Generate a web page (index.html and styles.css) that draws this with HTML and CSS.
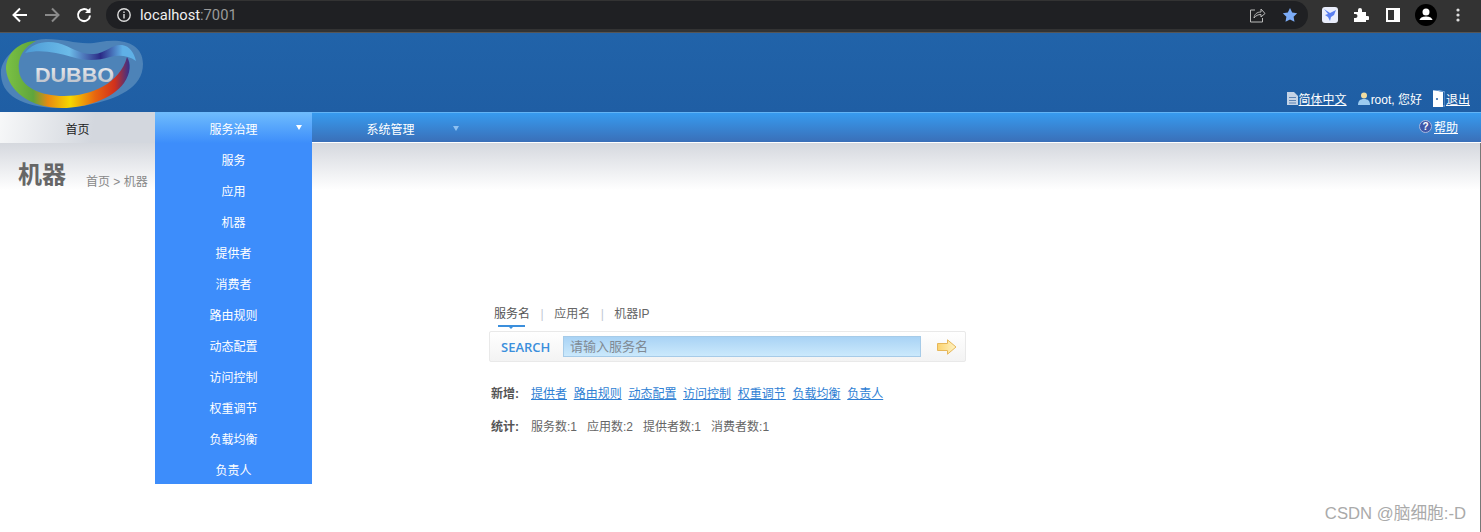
FILE: index.html
```html
<!DOCTYPE html>
<html lang="zh-CN">
	<head>
		<meta charset="UTF-8" />
		<title>dubbo admin</title>
		<link rel="stylesheet" href="styles.css">
	</head>
	<body>
		<div class="browser">
			<svg class="tool" width="20" height="20" viewBox="0 0 20 20"><path d="M17 10H4M10 3.500L3.500 10l6.500 6.500" fill="none" stroke="#fff" stroke-width="2"/></svg>
			<svg class="tool" width="20" height="20" viewBox="0 0 20 20"><path d="M3 10h13M10 3.500l6.500 6.500-6.500 6.500" fill="none" stroke="#8a8a8a" stroke-width="2"/></svg>
			<svg class="tool" width="20" height="20" viewBox="0 0 20 20"><path d="M16 10.500a6 6 0 1 1-1.800-4.700" fill="none" stroke="#fff" stroke-width="2"/><path d="M16.500 2.500v5.500H11z" fill="#fff"/></svg>
			<div class="omnibox">
				<svg width="16" height="16" viewBox="0 0 16 16"><circle cx="8" cy="8" r="6.200" fill="none" stroke="#ddd" stroke-width="1.400"/><path d="M7.300 7h1.400v4.500H7.300zM7.300 4.500h1.400v1.400H7.300z" fill="#ddd"/></svg>
				<span class="url">localhost<span class="port">:7001</span></span>
				<span class="spacer"></span>
				<svg width="18" height="18" viewBox="0 0 18 18"><path d="M7 4H2.500v12h12v-4M6 12c.5-4 3-6 7-6V3l4 4.500L13 11V8.500c-3 0-5 1-7 3.500z" fill="none" stroke="#bbb" stroke-width="1"/></svg>
				<svg width="16" height="16" viewBox="0 0 16 16"><path d="M8 1l2.200 4.600 5 .7-3.600 3.500.9 5L8 12.400l-4.500 2.400.9-5L.8 6.300l5-.7z" fill="#7cacf8"/></svg>
			</div>
			<div class="toolbar">
				<div class="ext-logo">
					<svg width="16" height="16" viewBox="0 0 16 16"><path d="M2 2l6 4 6-3-2 5-3 2-1 4-2-4-3-2 3-1z" fill="#5a7ff0"/></svg>
				</div>
				<svg width="16" height="16" viewBox="0 0 16 16"><path d="M1 5h4V3a2 2 0 0 1 4 0v2h4v4h1.500a2 2 0 0 1 0 4H13v2H1v-4h1.500a2 2 0 0 0 0-4H1z" fill="#fff"/></svg>
				<svg class="tb-panel" width="14" height="14" viewBox="0 0 14 14"><path d="M0 0h14v14H0zM2 2v10h6V2z" fill="#fff"/></svg>
				<svg class="tb-avatar" width="22" height="22" viewBox="0 0 22 22"><circle cx="11" cy="11" r="11" fill="#000"/><circle cx="11" cy="8" r="3.500" fill="#fff"/><path d="M4.500 16c1-3 4-3.500 6.500-3.500s5.500.5 6.500 3.500z" fill="#fff"/></svg>
				<svg width="4" height="14" viewBox="0 0 4 14"><circle cx="2" cy="2" r="1.600" fill="#ddd"/><circle cx="2" cy="7" r="1.600" fill="#ddd"/><circle cx="2" cy="12" r="1.600" fill="#ddd"/></svg>
			</div>
		</div>

		<div class="header">
			<div class="logo">
				<svg width="144" height="79" viewBox="0 0 144 79">
					<defs>
						<linearGradient id="ring" x1="0" y1="0" x2="1" y2="0">
							<stop offset="0" stop-color="#7bc143"/>
							<stop offset="0.22" stop-color="#5fa53c"/>
							<stop offset="0.34" stop-color="#e98a10"/>
							<stop offset="0.52" stop-color="#f6d800"/>
							<stop offset="0.72" stop-color="#e8650f"/>
							<stop offset="0.88" stop-color="#d1301c"/>
							<stop offset="1" stop-color="#32308f"/>
						</linearGradient>
						<linearGradient id="band" x1="0" y1="0" x2="1" y2="0">
							<stop offset="0" stop-color="#4c9bd6"/>
							<stop offset="0.4" stop-color="#6cbbe8"/>
							<stop offset="0.68" stop-color="#2b2a86"/>
							<stop offset="0.88" stop-color="#5fb0e6"/>
						</linearGradient>
						<linearGradient id="word" x1="0" y1="0" x2="0" y2="1">
							<stop offset="0" stop-color="#f4f5f7"/>
							<stop offset="1" stop-color="#b4bac4"/>
						</linearGradient>
					</defs>
					<path d="M1 42C-1 24 22 7 46 6c22 0 34 7 54 3 20-4 43 0 43 22 0 24-26 35-55 41-30 6-85 5-87-30z" fill="#4d83b8"/>
					<path d="M6 36C6 20 20 8 36 8 24 14 17 24 19 38c2 16 21 25 45 25 28 0 56-13 63-39 4 6 4 16-3 26C112 66 86 75 62 75 30 75 8 58 6 36z" fill="url(#ring)"/>
					<path d="M25 20C32 10 45 7 58 10c14 4 22 12 36 11 12-1 18-10 28-9 8 1 12 8 14 16-8-6-18-6-26-4-12 4-26 4-38 0-16-5-32-8-47-4z" fill="url(#band)"/>
					<text class="logo-word" x="35" y="49" textLength="79" lengthAdjust="spacingAndGlyphs" fill="url(#word)">DUBBO</text>
				</svg>
			</div>
			<div class="userbar">
				<a class="userlink" href="#">
					<svg width="11" height="13" viewBox="0 0 11 13"><path d="M0 0h7l4 4v9H0z" fill="#c4d3e6"/><path d="M2 5h7v1H2zM2 8h7v1H2zM2 10.500h7v1H2z" fill="#5c84b4"/></svg>
					<span class="u">简体中文</span>
				</a>
				<span class="userlink">
					<svg width="12" height="13" viewBox="0 0 12 13"><circle cx="6" cy="3.500" r="3" fill="#f0dca0"/><path d="M0 13c0-4 2-6 6-6s6 2 6 6z" fill="#9ccbf0"/></svg>
					root, 您好
				</span>
				<a class="userlink" href="#">
					<svg width="12" height="17" viewBox="0 0 12 17"><path d="M0 0l10 2v15H0z" fill="#fff"/><path d="M0 0l4 0 8 2v14h-2" fill="none" stroke="#7aa7dc"/><circle cx="4" cy="9" r="1" fill="#245fa6"/></svg>
					<span class="u">退出</span>
				</a>
			</div>
		</div>

		<nav class="nav">
			<a class="nav-item nav-home" href="#">首页</a>
			<div class="nav-item nav-open">
				服务治理<span class="caret"></span>
				<ul class="dropdown">
					<li>服务</li>
					<li>应用</li>
					<li>机器</li>
					<li>提供者</li>
					<li>消费者</li>
					<li>路由规则</li>
					<li>动态配置</li>
					<li>访问控制</li>
					<li>权重调节</li>
					<li>负载均衡</li>
					<li>负责人</li>
				</ul>
			</div>
			<div class="nav-item">系统管理<span class="caret dim"></span></div>
			<span class="spacer"></span>
			<a class="help" href="#">
				<svg width="13" height="13" viewBox="0 0 13 13"><circle cx="6.500" cy="6.500" r="6" fill="#3f57a8" stroke="#a9b6dc"/><text class="help-q" x="6.500" y="10" text-anchor="middle" fill="#fff">?</text></svg>
				<span class="u">帮助</span>
			</a>
		</nav>

		<div class="pagehead">
			<h1>机器</h1>
			<span class="crumb">首页 &gt; 机器</span>
		</div>

		<main class="search-area">
			<div class="tabs">
				<span class="tab tab-on">服务名</span>
				<span class="sep">|</span>
				<span class="tab">应用名</span>
				<span class="sep">|</span>
				<span class="tab">机器IP</span>
			</div>
			<div class="searchbox">
				<span class="search-label">SEARCH</span>
				<div class="search-input">请输入服务名</div>
				<svg class="search-go" width="20" height="16" viewBox="0 0 20 16">
					<defs><linearGradient id="arrow" x1="0" y1="0" x2="1" y2="0"><stop offset="0" stop-color="#fbd36f"/><stop offset="1" stop-color="#fff3c4"/></linearGradient></defs>
					<path d="M.5 4.500h10V.8L19 8l-8.500 7.200v-3.700H.5z" fill="url(#arrow)" stroke="#e6b75a"/>
				</svg>
			</div>
			<div class="row row-add">
				<b>新增:</b>
				<a href="#">提供者</a>
				<a href="#">路由规则</a>
				<a href="#">动态配置</a>
				<a href="#">访问控制</a>
				<a href="#">权重调节</a>
				<a href="#">负载均衡</a>
				<a href="#">负责人</a>
			</div>
			<div class="row row-stat">
				<b>统计:</b>
				<span>服务数:1</span>
				<span>应用数:2</span>
				<span>提供者数:1</span>
				<span>消费者数:1</span>
			</div>
		</main>

		<div class="watermark">CSDN @脑细胞:-D</div>
		<div class="edge"></div>
	</body>
</html>
```

FILE: styles.css
```css
* {
	box-sizing: border-box;
}

body {
	margin: 0;
	height: 532px;
	overflow: hidden;
	position: relative;
	background: #fff;
	font-family: "Liberation Sans", "Noto Sans CJK SC", sans-serif;
	font-size: 12px;
	color: #666;
}

a {
	color: inherit;
}

.spacer {
	flex: 1;
}

.browser {
	display: flex;
	align-items: center;
	height: 33px;
	padding: 0 21px 3px 10px;
	background: #333;
	border-bottom: 1px solid #555;
	gap: 12px;
}

.tool {
	flex: none;
}

.omnibox {
	display: flex;
	align-items: center;
	gap: 8px;
	width: 1202px;
	height: 28px;
	padding: 0 10px;
	border-radius: 14px;
	background: #1f2023;
}

.omnibox svg:last-child {
	margin-left: 8px;
}

.url {
	font-family: Roboto, "Liberation Sans", sans-serif;
	font-size: 14.7px;
	color: #f0f0f0;
}

.port {
	color: #9a9a9a;
}

.toolbar {
	display: flex;
	flex: 1;
	align-items: center;
	gap: 15px;
	margin-left: 2px;
}

.tb-panel {
	margin-left: 2px;
}

.tb-avatar {
	margin-right: 4px;
}

.ext-logo {
	width: 16px;
	height: 16px;
	border-radius: 3px;
	background: #e9edfb;
	line-height: 0;
}

.header {
	display: flex;
	justify-content: space-between;
	align-items: flex-end;
	height: 79px;
	background: linear-gradient(#2163a9, #1f5ea4);
}

.logo {
	line-height: 0;
}

.userbar {
	display: flex;
	align-items: center;
	gap: 11px;
	padding: 0 11px 5px 0;
	color: #fff;
	font-size: 12px;
}

.userlink {
	display: flex;
	align-items: center;
	gap: 1px;
	text-decoration: none;
}

.u {
	text-decoration: underline;
}

.nav {
	display: flex;
	align-items: stretch;
	height: 31px;
	border-top: 1px solid #62b4f6;
	border-bottom: 1px solid #fff;
	background: linear-gradient(#379bef, #3a6fb8);
	color: #fff;
}

.nav-item {
	position: relative;
	display: flex;
	align-items: center;
	justify-content: center;
	width: 157px;
	padding-top: 1px;
	text-decoration: none;
}

.nav-home {
	width: 155px;
	color: #222;
	background: linear-gradient(100deg, #f7f8f9, #d3d7de 60%);
	margin-top: -1px;
	margin-bottom: -1px;
}

.nav-open {
	background: linear-gradient(#6fbcfd, #3d8efb);
	margin-top: -1px;
	margin-bottom: -1px;
}

.caret {
	position: absolute;
	right: 10px;
	top: 13px;
	border-left: 3px solid transparent;
	border-right: 3px solid transparent;
	border-top: 5px solid #fff;
}

.caret.dim {
	border-top-color: #8ec1f2;
}

.dropdown {
	position: absolute;
	z-index: 5;
	left: 0;
	top: 31px;
	width: 157px;
	height: 341px;
	overflow: hidden;
	margin: 0;
	padding: 3px 0 0;
	list-style: none;
	background: #3d8dfb;
	text-align: center;
}

.dropdown li {
	height: 31px;
	line-height: 31px;
}

.help {
	display: flex;
	align-items: center;
	gap: 2px;
	padding: 0 23px 2px 0;
	text-decoration: none;
}

.help-q {
	font-family: "Liberation Sans", sans-serif;
	font-size: 10px;
	font-weight: bold;
}

.pagehead {
	display: flex;
	align-items: flex-start;
	height: 47px;
	padding: 15px 0 0 18px;
	background: linear-gradient(#d5d8de, #fff);
}

.pagehead h1 {
	margin: 0 20px 0 0;
	font-size: 24px;
	line-height: 33px;
	font-weight: bold;
	color: #666;
}

.crumb {
	margin-top: 14px;
	color: #888;
}

.search-area {
	width: 477px;
	margin: 115px 0 0 489px;
}

.tabs {
	display: flex;
	align-items: center;
	gap: 10.5px;
	height: 26px;
	padding: 0 0 9px 5px;
	color: #666;
}

.tab {
	position: relative;
	line-height: 20px;
}

.tab-on {
	color: #555;
}

.tab-on::after {
	content: "";
	position: absolute;
	left: 4px;
	right: 5px;
	bottom: -3px;
	height: 2px;
	background: #3b8fdc;
}

.tab-on::before {
	content: "";
	position: absolute;
	left: 15px;
	bottom: -5px;
	border-left: 2px solid transparent;
	border-right: 2px solid transparent;
	border-top: 2px solid #3b8fdc;
}

.sep {
	color: #c2c8d2;
}

.searchbox {
	display: flex;
	align-items: center;
	height: 31px;
	padding: 0 8px 0 11px;
	border: 1px solid #e9e9e9;
	border-radius: 2px;
	background: linear-gradient(#fff, #f3f3f3);
}

.search-label {
	width: 62px;
	font-family: "Open Sans", "Liberation Sans", sans-serif;
	font-size: 13px;
	font-weight: 600;
	color: #3b8fdc;
}

.search-input {
	width: 358px;
	height: 21px;
	line-height: 20px;
	padding-left: 6px;
	border: 1px solid #a6cbe8;
	background: linear-gradient(#a9d3f5, #cbe9fc);
	font-size: 13px;
	color: #808a94;
}

.search-go {
	margin-left: 16px;
}

.row {
	display: flex;
	gap: 6.7px;
	padding-left: 2px;
	line-height: 18px;
}

.row b {
	width: 33px;
	color: #555;
}

.row-add {
	margin-top: 23px;
}

.row-add b {
	margin-right: 0.3px;
}

.row-add a {
	color: #2f7fd4;
}

.row-stat {
	margin-top: 15px;
	gap: 10px;
}

.row-stat b {
	margin-right: -3px;
}

.logo-word {
	font-family: "Liberation Sans", sans-serif;
	font-size: 21px;
	font-weight: bold;
}

.watermark {
	position: absolute;
	right: 15px;
	bottom: 8px;
	font-size: 16.7px;
	color: #aaa;
}

.edge {
	position: absolute;
	top: 143px;
	right: 0;
	bottom: 0;
	width: 1px;
	background: #777;
}
```
